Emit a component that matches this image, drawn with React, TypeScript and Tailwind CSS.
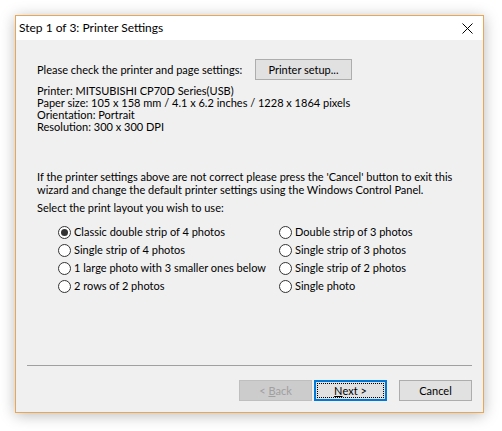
const Radio = ({ checked, label }: { checked?: boolean; label: string }) => (
  <div className="flex h-[18px] items-center whitespace-nowrap">
    <span className="flex h-[13px] w-[13px] shrink-0 items-center justify-center rounded-full border border-[#333333] bg-white">
      {checked && <span className="h-[7px] w-[7px] rounded-full bg-[#333333]"></span>}
    </span>
    <span className="ml-[3px]">{label}</span>
  </div>
);

const App = () => {
  return (
    <div
      className="h-[431px] w-[502px] bg-white pl-[15px] pt-[15px] text-[11px] leading-[12px] text-black"
      style={{ fontFamily: 'Lato, sans-serif' }}
    >
      <div className="flex h-[398px] w-[469px] flex-col border border-[#e9a654] bg-[#f0f0f0] shadow-[0_2px_14px_rgba(0,0,0,0.28)]">
        {/* Title bar */}
        <div className="flex h-[24px] shrink-0 items-center justify-between bg-white pl-[3px] pr-[10px] text-[12px]">
          <span className="whitespace-nowrap">Step 1 of 3: Printer Settings</span>
          <svg width="11" height="11" viewBox="0 0 11 11" className="mt-[1px]">
            <path d="M0.5 0.5 L10.5 10.5 M10.5 0.5 L0.5 10.5" stroke="#000" strokeWidth="1" fill="none" />
          </svg>
        </div>

        <div className="flex flex-1 flex-col whitespace-nowrap pl-[21px] pr-[11px]">
          <div className="mt-[19px] flex h-[21px] items-center">
            <span className="w-[218px]">Please check the printer and page settings:</span>
            <button className="h-[21px] w-[97px] border border-[#adadad] bg-[#e1e1e1] text-[11px]">
              Printer setup...
            </button>
          </div>

          <div className="mt-[5px] flex flex-col">
            <span>Printer: MITSUBISHI CP70D Series(USB)</span>
            <span>Paper size: 105 x 158 mm / 4.1 x 6.2 inches / 1228 x 1864 pixels</span>
            <span>Orientation: Portrait</span>
            <span>Resolution: 300 x 300 DPI</span>
          </div>

          <div className="mt-[37px] flex flex-col leading-[13px]">
            <span>If the printer settings above are not correct please press the 'Cancel' button to exit this</span>
            <span>wizard and change the default printer settings using the Windows Control Panel.</span>
          </div>

          <div className="mt-[5px] leading-[13px]">Select the print layout you wish to use:</div>

          <div className="mt-[9px] grid grid-cols-[221px_1fr] pl-[21px]">
            <div className="flex flex-col">
              <Radio checked label="Classic double strip of 4 photos" />
              <Radio label="Single strip of 4 photos" />
              <Radio label="1 large photo with 3 smaller ones below" />
              <Radio label="2 rows of 2 photos" />
            </div>
            <div className="flex flex-col">
              <Radio label="Double strip of 3 photos" />
              <Radio label="Single strip of 3 photos" />
              <Radio label="Single strip of 2 photos" />
              <Radio label="Single photo" />
            </div>
          </div>

          <div className="mt-auto -ml-[10px] h-[1px] bg-[#a0a0a0]"></div>

          <div className="mb-[11px] mt-[14px] flex justify-end">
            <button className="h-[21px] w-[73px] border border-[#bfbfbf] bg-[#cccccc] text-[11px] text-[#a0a0a0]">
              &lt; <span className="underline">B</span>ack
            </button>
            <button className="ml-[2px] h-[21px] w-[73px] border-2 border-[#0078d7] bg-[#e1e1e1] p-[1px] text-[11px]">
              <span className="flex h-full w-full items-center justify-center border border-dotted border-black">
                <span className="underline">N</span>ext &gt;
              </span>
            </button>
            <button className="ml-[12px] h-[21px] w-[73px] border border-[#adadad] bg-[#e1e1e1] text-[11px]">
              Cancel
            </button>
          </div>
        </div>
      </div>
    </div>
  );
};

export default App;
